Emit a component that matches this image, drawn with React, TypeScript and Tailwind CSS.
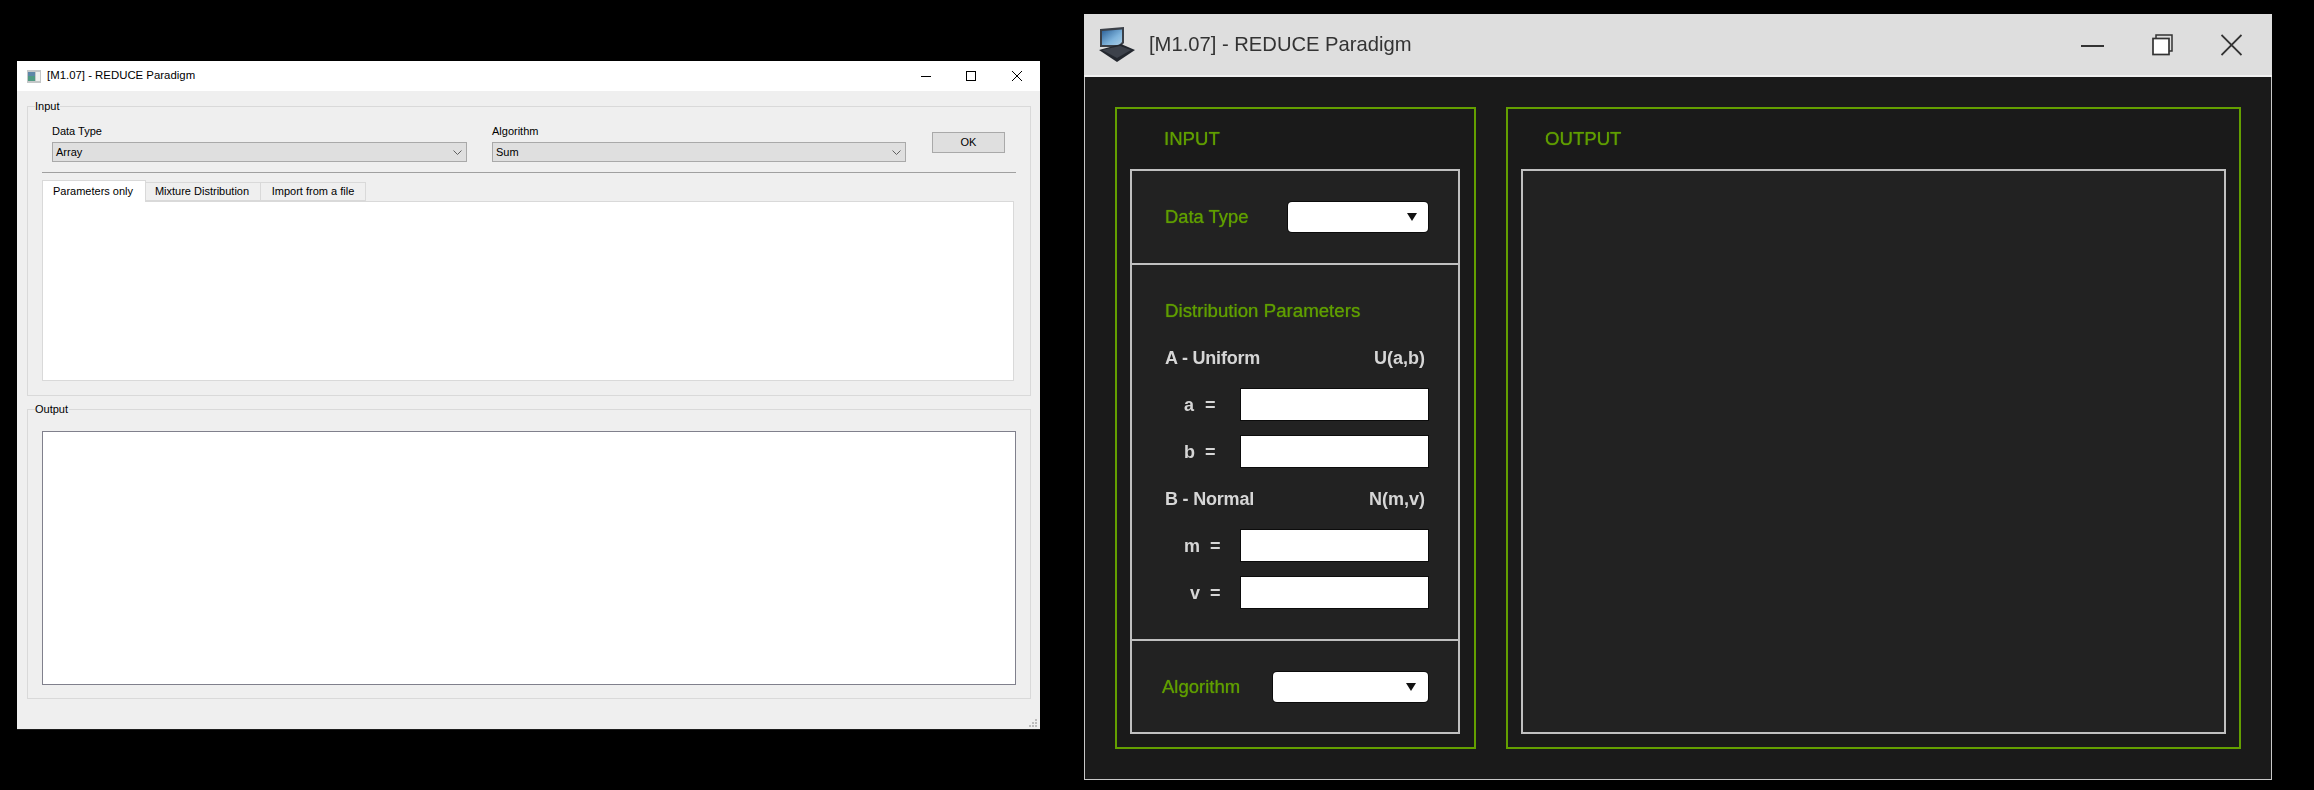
const ui = "font-['Liberation_Sans',Arial,sans-serif]";

function Chevron() {
  return (
    <svg width="9" height="5" viewBox="0 0 9 5" fill="none" className="shrink-0">
      <path d="M0.5 0.5 L4.5 4.5 L8.5 0.5" stroke="#606060" strokeWidth="1" />
    </svg>
  );
}

function Combo({ label, value, width }: { label: string; value: string; width: string }) {
  return (
    <div className={width}>
      <div className="h-[17px] text-[11px] leading-[13px] text-black">{label}</div>
      <div className="flex h-[20px] items-center justify-between border border-[#a9a9a9] bg-[#dfdfdf] pl-[3px] pr-[4px] text-[11px] text-black">
        <span>{value}</span>
        <Chevron />
      </div>
    </div>
  );
}

function GroupBox({ title, className, children }: { title: string; className: string; children: React.ReactNode }) {
  return (
    <div className={`relative ml-[10px] w-[1004px] border border-[#d9d9d9] ${className}`}>
      <span className="absolute -top-[7px] left-[7px] bg-[#efefef] pr-[1px] text-[11px] leading-[13px] text-black">{title}</span>
      {children}
    </div>
  );
}

function ResizeGrip() {
  const dots = [
    [6, 0],
    [3, 3],
    [6, 3],
    [0, 6],
    [3, 6],
    [6, 6],
  ];
  return (
    <svg width="8" height="8" viewBox="0 0 8 8" className="absolute bottom-[2px] right-[3px]">
      {dots.map(([x, y]) => (
        <rect key={`${x}-${y}`} x={x} y={y} width="2" height="2" fill="#bdbdbd" />
      ))}
    </svg>
  );
}

function QtWindow() {
  return (
    <div className={`ml-[17px] mt-[61px] h-[669px] w-[1023px] shrink-0 border-b border-[#1c1c1c] bg-[#efefef] ${ui}`}>
      <div className="flex h-[30px] items-center bg-white pl-[10px]">
        <svg width="14" height="13" viewBox="0 0 14 13" className="shrink-0">
          <rect x="0" y="0" width="14" height="13" fill="#c4c7c8" />
          <rect x="1" y="2" width="7" height="9" fill="#4f9a83" />
          <rect x="1" y="2" width="7" height="4" fill="#5d87a8" />
          <rect x="9" y="2" width="4" height="9" fill="#eef0ee" />
        </svg>
        <span className="ml-[6px] text-[11.4px] text-black">[M1.07] - REDUCE Paradigm</span>
        <div className="ml-auto flex items-center">
          <svg width="10" height="10" viewBox="0 0 10 10">
            <path d="M0 5.5 H10" stroke="#000" strokeWidth="1" />
          </svg>
          <svg width="10" height="10" viewBox="0 0 10 10" className="ml-[35px]">
            <rect x="0.5" y="0.5" width="9" height="9" fill="none" stroke="#000" strokeWidth="1" />
          </svg>
          <svg width="10" height="10" viewBox="0 0 10 10" className="ml-[36px] mr-[18px]">
            <path d="M0 0 L10 10 M10 0 L0 10" stroke="#000" strokeWidth="1" />
          </svg>
        </div>
      </div>

      <div className="relative h-[638px] pt-[15px]">
        <GroupBox title="Input" className="h-[290px]">
          <div className="flex items-start pl-[24px] pt-[18px]">
            <Combo label="Data Type" value="Array" width="w-[415px]" />
            <div className="ml-[25px]">
              <Combo label="Algorithm" value="Sum" width="w-[414px]" />
            </div>
            <button className="ml-[26px] mt-[7px] h-[21px] w-[73px] border border-[#a9a9a9] bg-[#dfdfdf] text-[11px] text-black">OK</button>
          </div>
          <div className="ml-[14px] mt-[10px] h-px w-[974px] bg-[#a0a0a0]" />
          <div className="ml-[14px] mt-[7px] flex h-[21px] items-end">
            <div className="relative z-10 -mb-px flex h-[22px] w-[104px] items-center justify-center border border-b-0 border-[#d9d9d9] bg-white pr-[2px] text-[11px] text-black">
              Parameters only
            </div>
            <div className="flex h-[19px] w-[115px] items-center justify-center border border-l-0 border-[#d9d9d9] bg-[#efefef] pr-[2px] text-[11px] text-black">
              Mixture Distribution
            </div>
            <div className="flex h-[19px] w-[105px] items-center justify-center border border-l-0 border-[#d9d9d9] bg-[#efefef] text-[11px] text-black">
              Import from a file
            </div>
          </div>
          <div className="ml-[14px] h-[180px] w-[972px] border border-[#d9d9d9] bg-white" />
        </GroupBox>

        <GroupBox title="Output" className="mt-[13px] h-[290px]">
          <div className="ml-[14px] mt-[21px] h-[254px] w-[974px] border border-[#80808c] bg-white" />
        </GroupBox>
        <ResizeGrip />
      </div>
    </div>
  );
}

function LaptopIcon() {
  return (
    <svg width="36" height="36" viewBox="0 0 36 36" className="shrink-0">
      <defs>
        <linearGradient id="screen" x1="0" y1="0" x2="1" y2="1">
          <stop offset="0" stopColor="#2a5f96" />
          <stop offset="0.6" stopColor="#7fb4dc" />
          <stop offset="1" stopColor="#a9cde6" />
        </linearGradient>
      </defs>
      <path d="M1 2 L25 0 L25 16 L21 20 L1 20 Z" fill="#3b4048" />
      <path d="M3 4 L23 2.5 L23 15 L20 18 L3 18 Z" fill="url(#screen)" />
      <path d="M0 23 L22 17 L36 23 L18 35 Z" fill="#23272e" />
      <path d="M3 23 L21 19 L32 23 L18 31 Z" fill="#3d424b" />
    </svg>
  );
}

function WindowButtons() {
  return (
    <div className="ml-auto flex items-center">
      <svg width="23" height="22" viewBox="0 0 23 22">
        <path d="M0 12 H23" stroke="#333" strokeWidth="2" />
      </svg>
      <svg width="21" height="22" viewBox="0 0 21 22" className="ml-[48px]">
        <path d="M4 4 V1 H20 V17 H17" fill="none" stroke="#333" strokeWidth="1.5" />
        <rect x="1" y="4.5" width="16" height="16" fill="#fff" stroke="#333" strokeWidth="1.7" />
      </svg>
      <svg width="21" height="22" viewBox="0 0 21 22" className="ml-[48px] mr-[30px]">
        <path d="M0.5 1 L20.5 21 M20.5 1 L0.5 21" stroke="#333" strokeWidth="1.8" />
      </svg>
    </div>
  );
}

function Select({ width, arrow }: { width: string; arrow: string }) {
  return (
    <div className={`ml-auto flex h-[30px] items-center justify-end rounded-[4px] bg-white shadow-[0_0_0_1px_#0c0c0c] ${width} ${arrow}`}>
      <svg width="10" height="8" viewBox="0 0 10 8">
        <path d="M0 0 H10 L5 8 Z" fill="#111" />
      </svg>
    </div>
  );
}

function ParamHeading({ left, right }: { left: string; right: string }) {
  return (
    <div className="mr-[3px] flex h-[30px] items-center justify-between text-[18px] font-bold text-[#d6d6d6]">
      <span className="tracking-[-0.2px]">{left}</span>
      <span>{right}</span>
    </div>
  );
}

function ParamInput({ name, nameClass, className }: { name: string; nameClass: string; className: string }) {
  return (
    <div className={`flex h-[31px] items-center text-[18px] font-bold text-[#d6d6d6] ${className}`}>
      <span className={`pt-[2px] ${nameClass}`}>{name}</span>
      <span className="pt-[2px]">=</span>
      <input className="ml-auto h-[31px] w-[187px] bg-white shadow-[0_0_0_1px_#0c0c0c]" />
    </div>
  );
}

function WebWindow() {
  return (
    <div className={`ml-[44px] mt-[14px] h-[766px] w-[1188px] shrink-0 border-x border-b border-[#c8c8c8] bg-[#1a1a1a] blur-[0.4px] ${ui}`}>
      <div className="-mx-px flex h-[63px] items-center border-b-2 border-[#f0f0f0] bg-[#dedede] pl-[15px]">
        <LaptopIcon />
        <span className="ml-[14px] text-[20.2px] text-[#333]">[M1.07] - REDUCE Paradigm</span>
        <WindowButtons />
      </div>

      <div className="flex gap-[30px] pl-[30px] pt-[30px]">
        <div className="h-[642px] w-[361px] border-2 border-[#639f00] px-[13px]">
          <div className="flex h-[60px] items-center pl-[34px] text-[18.6px] text-[#5f9e00] [text-shadow:0_0_1px_#5f9e00]">INPUT</div>
          <div className="flex h-[565px] w-[330px] flex-col border-2 border-[#c0c0c0] bg-[#222]">
            <div className="flex h-[92px] items-center pl-[33px] pr-[30px]">
              <span className="text-[18.4px] text-[#5f9e00] [text-shadow:0_0_1px_#5f9e00]">Data Type</span>
              <Select width="w-[140px]" arrow="pr-[11px]" />
            </div>
            <div className="h-[378px] border-y-2 border-[#c0c0c0] pl-[33px] pr-[30px] pt-[31px]">
              <div className="flex h-[30px] items-center text-[18.7px] text-[#5f9e00] [text-shadow:0_0_1px_#5f9e00]">Distribution Parameters</div>
              <div className="mt-[17px]">
                <ParamHeading left="A - Uniform" right="U(a,b)" />
              </div>
              <ParamInput name="a" nameClass="ml-[19px] w-[21px]" className="mt-[16px]" />
              <ParamInput name="b" nameClass="ml-[19px] w-[21px]" className="mt-[16px]" />
              <div className="mt-[17px]">
                <ParamHeading left="B - Normal" right="N(m,v)" />
              </div>
              <ParamInput name="m" nameClass="ml-[19px] w-[26px]" className="mt-[16px]" />
              <ParamInput name="v" nameClass="ml-[25px] w-[20px]" className="mt-[16px]" />
            </div>
            <div className="flex flex-1 items-center pl-[30px] pr-[30px]">
              <span className="text-[18.5px] text-[#5f9e00] [text-shadow:0_0_1px_#5f9e00]">Algorithm</span>
              <Select width="w-[155px]" arrow="pr-[12px]" />
            </div>
          </div>
        </div>

        <div className="h-[642px] w-[735px] border-2 border-[#639f00] px-[13px]">
          <div className="flex h-[60px] items-center pl-[24px] text-[18.6px] text-[#5f9e00] [text-shadow:0_0_1px_#5f9e00]">OUTPUT</div>
          <div className="h-[565px] w-[705px] border-2 border-[#c0c0c0] bg-[#222]" />
        </div>
      </div>
    </div>
  );
}

export default function App() {
  return (
    <div className="flex h-[790px] w-[2314px] items-start overflow-hidden bg-black">
      <QtWindow />
      <WebWindow />
    </div>
  );
}
